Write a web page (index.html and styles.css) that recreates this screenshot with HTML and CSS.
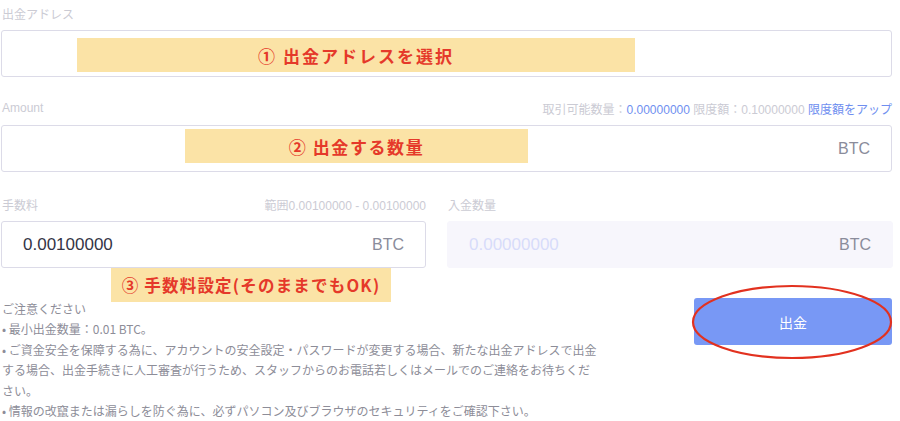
FILE: index.html
```html
<!DOCTYPE html>
<html>
<head>
  <title>出金</title>
  <link rel="stylesheet" href="styles.css">
</head>
<body>
  <div class="withdraw">
    <div class="field field-address">
      <div class="field-head">
        <span class="label">出金アドレス</span>
      </div>
      <div class="input">
        <span class="sticker sticker-address">① 出金アドレスを選択</span>
      </div>
    </div>

    <div class="field field-amount">
      <div class="field-head">
        <span class="label">Amount</span>
        <span class="info">取引可能数量：<span class="blue">0.00000000</span> 限度額：0.10000000 <span class="blue">限度額をアップ</span></span>
      </div>
      <div class="input">
        <span class="sticker sticker-amount">② 出金する数量</span>
        <span class="unit">BTC</span>
      </div>
    </div>

    <div class="fee-row">
      <div class="field field-fee">
        <div class="field-head">
          <span class="label">手数料</span>
          <span class="info">範囲0.00100000 - 0.00100000</span>
        </div>
        <div class="input">
          <span class="value">0.00100000</span>
          <span class="unit">BTC</span>
        </div>
        <span class="sticker sticker-fee">③ 手数料設定(そのままでもOK)</span>
      </div>
      <div class="field field-receive">
        <div class="field-head">
          <span class="label">入金数量</span>
        </div>
        <div class="input input-disabled">
          <span class="value">0.00000000</span>
          <span class="unit">BTC</span>
        </div>
      </div>
    </div>

    <div class="bottom-row">
      <div class="notes">
        <div>ご注意ください</div>
        <div>• 最小出金数量：0.01 BTC。</div>
        <div>• ご資金安全を保障する為に、アカウントの安全設定・パスワードが変更する場合、新たな出金アドレスで出金する場合、出金手続きに人工審査が行うため、スタッフからのお電話若しくはメールでのご連絡をお待ちください。</div>
        <div>• 情報の改竄または漏らしを防ぐ為に、必ずパソコン及びブラウザのセキュリティをご確認下さい。</div>
      </div>
      <div class="submit-wrap">
        <button class="submit">出金</button>
        <svg class="circle" width="202" height="76" viewBox="0 0 202 76">
          <ellipse cx="101" cy="38" rx="99" ry="36" fill="none" stroke="#e2311f" stroke-width="2.2" />
        </svg>
      </div>
    </div>
  </div>
</body>
</html>
```

FILE: styles.css
```css
body {
  margin: 0;
  background: #fff;
  font-family: "Liberation Sans", "Noto Sans CJK JP", sans-serif;
}

.withdraw {
  width: 891px;
  margin-left: 1px;
  padding-top: 3px;
}

.field {
  position: relative;
}

.field-amount {
  margin-top: 21px;
}

.field-head {
  display: flex;
  justify-content: space-between;
  align-items: center;
  height: 20px;
  margin-bottom: 7px;
  padding-left: 1px;
  font-size: 12px;
  color: #cbcbd4;
}

.info .blue {
  color: #6f8ff0;
}

.input {
  position: relative;
  display: flex;
  align-items: center;
  height: 45px;
  padding: 0 21px;
  border: 1px solid #dcdbe8;
  border-radius: 3px;
}

.input-disabled {
  border-color: #f7f6fc;
  background: #f7f6fc;
}

.value {
  font-size: 17px;
  color: #343446;
}

.input-disabled .value {
  color: #d7dcfa;
}

.unit {
  margin-left: auto;
  font-size: 16px;
  color: #8a8c9b;
}

.fee-row {
  display: flex;
  gap: 21px;
  margin-top: 22px;
}

.field-fee {
  flex: 0 0 425px;
}

.field-receive {
  flex: 1;
  margin-right: -1px;
}

/* annotation stickers laid over the form */
.sticker {
  position: absolute;
  display: flex;
  align-items: center;
  justify-content: center;
  height: 34px;
  background: #fbe3a6;
  color: #e5392a;
  font-family: "Noto Sans CJK JP", sans-serif;
  font-size: 17px;
  font-weight: 700;
  white-space: nowrap;
}

.sticker-address {
  left: 75px;
  top: 7px;
  width: 558px;
  letter-spacing: 2px;
}

.sticker-amount {
  left: 183px;
  top: 3px;
  width: 343px;
  letter-spacing: 1.6px;
}

.sticker-fee {
  left: 110px;
  top: 74px;
  width: 280px;
  font-size: 16.5px;
  letter-spacing: 1.2px;
}

.bottom-row {
  display: flex;
  justify-content: space-between;
  margin-top: 31px;
}

.notes {
  width: 596px;
  padding-left: 1px;
  font-family: "Noto Sans CJK JP", sans-serif;
  font-size: 12px;
  line-height: 20.4px;
  color: #8d8d98;
}

.submit-wrap {
  position: relative;
  margin-top: -1px;
}

.submit {
  width: 198px;
  height: 47px;
  border: 0;
  border-radius: 3px;
  background: #7898f5;
  color: #fff;
  font-family: "Noto Sans CJK JP", sans-serif;
  font-size: 14px;
}

.circle {
  position: absolute;
  left: -3px;
  top: -14px;
}
```
